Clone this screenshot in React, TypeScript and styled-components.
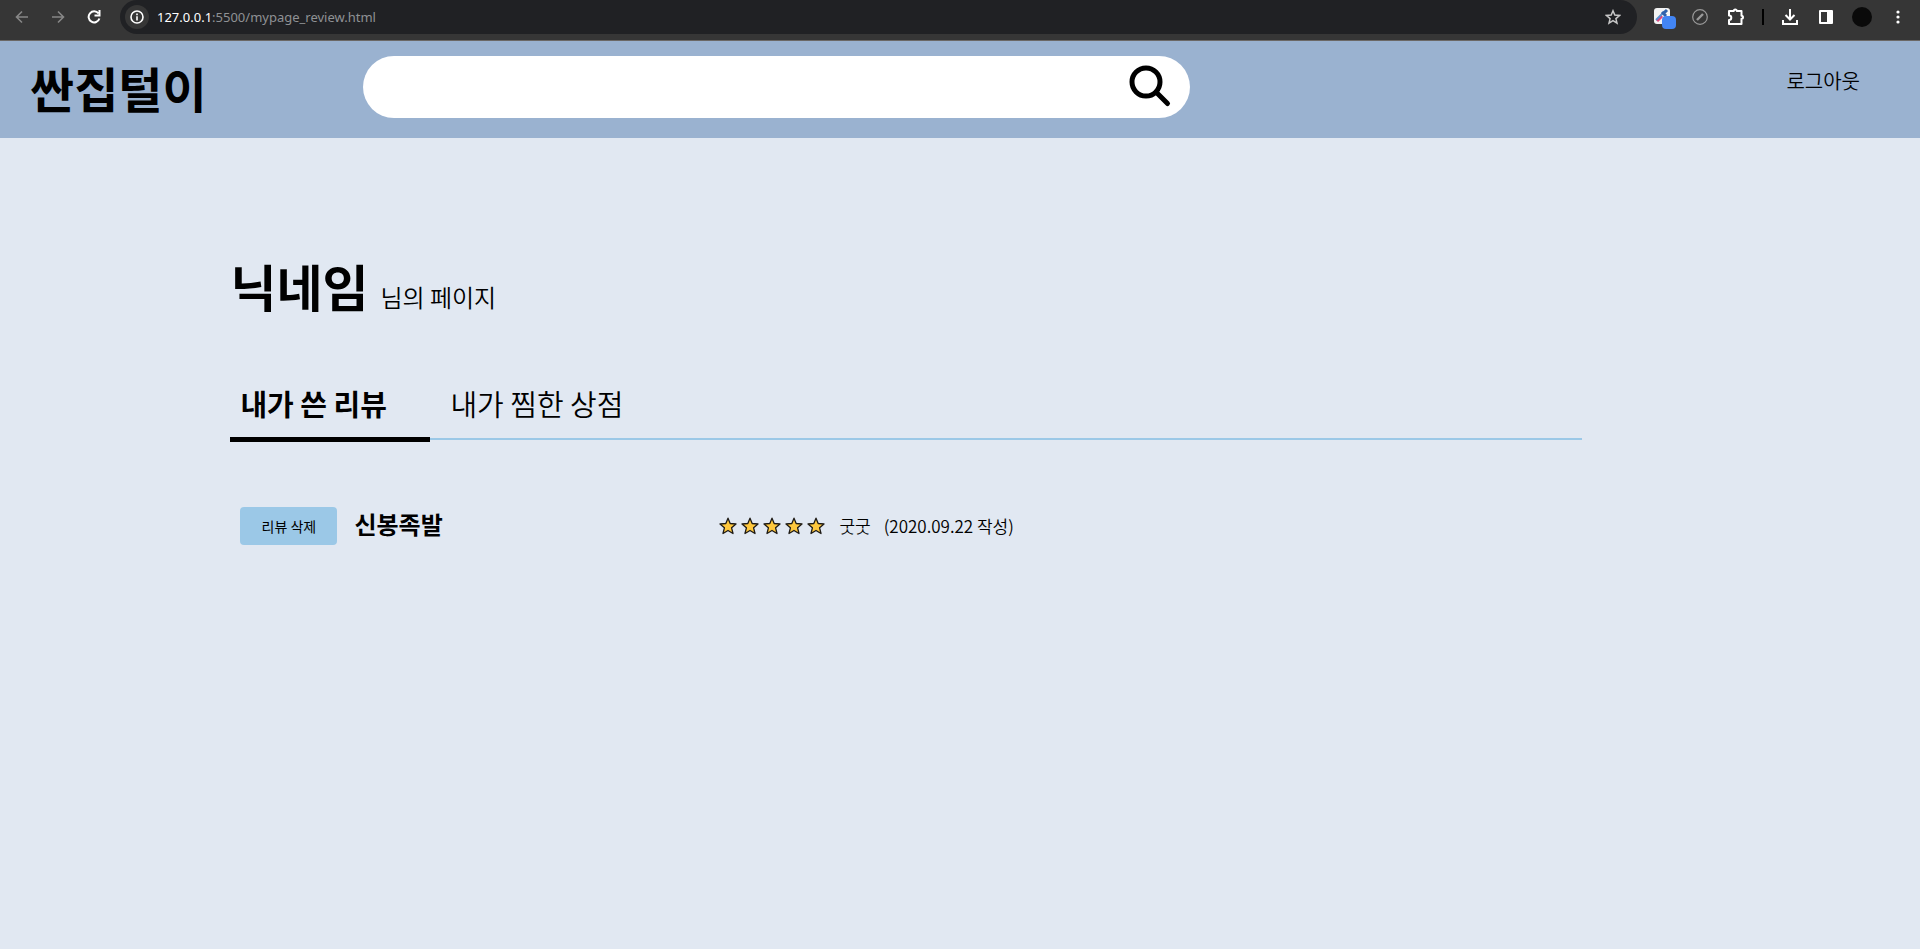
import React, { useState } from "react";
import styled, { createGlobalStyle } from "styled-components";

const GlobalStyle = createGlobalStyle`
  *, *::before, *::after { box-sizing: border-box; }
  body {
    margin: 0;
    background: #e1e8f2;
    color: #000;
    font-family: "Noto Sans CJK KR", "Noto Sans", sans-serif;
  }
`;

const BrowserBar = styled.div`
  display: flex;
  align-items: flex-start;
  height: 41px;
  padding: 0 10px;
  background: #363636;
  border-bottom: 1px solid #6b6866;
`;

const IconButton = styled.button<{ $color?: string }>`
  display: flex;
  align-items: center;
  justify-content: center;
  flex: none;
  width: 24px;
  height: 34px;
  padding: 0;
  border: 0;
  background: none;
  color: ${(p) => p.$color ?? "#fff"};
`;

const NavGroup = styled.div`
  display: flex;
  flex: none;
  gap: 12px;
  margin-right: 14px;
`;

const AddressBar = styled.div`
  display: flex;
  align-items: center;
  flex: 1;
  height: 34px;
  padding: 0 12px 0 5px;
  border-radius: 17px;
  background: #202124;
`;

const SiteInfo = styled(IconButton)`
  width: 24px;
  height: 24px;
  margin-right: 8px;
  border-radius: 50%;
  background: #363636;
`;

const Address = styled.div`
  flex: 1;
  color: #8f9194;
  font: 13px/18px "Noto Sans", "Open Sans", sans-serif;
`;

const Host = styled.span`
  color: #fff;
`;

const ToolGroup = styled.div`
  display: flex;
  flex: none;
  gap: 12px;
  margin-left: 15px;
`;

const Divider = styled.span`
  width: 2px;
  height: 16px;
  margin: 9px 2px 0;
  background: #000;
`;

const Avatar = styled.span`
  width: 20px;
  height: 20px;
  border-radius: 50%;
  background: #0a0a0a;
`;

const Header = styled.header`
  display: flex;
  align-items: flex-start;
  padding: 15px 60px 20px 30px;
  background: #9ab2d0;
`;

const Logo = styled.a`
  flex: none;
  width: 333px;
  color: #000;
  font-size: 48px;
  font-weight: 700;
  line-height: 62px;
  text-decoration: none;
`;

const SearchForm = styled.form`
  display: flex;
  align-items: center;
  min-width: 280px;
  flex: 0 1 827px;
  height: 62px;
  padding: 0 18px 0 30px;
  border-radius: 31px;
  background: #fff;
`;

const SearchInput = styled.input`
  flex: 1;
  min-width: 0;
  height: 40px;
  border: 0;
  outline: 0;
  background: none;
  font: 20px/30px "Noto Sans CJK KR", sans-serif;
`;

const SearchButton = styled.button`
  display: flex;
  padding: 0;
  border: 0;
  background: none;
`;

const Logout = styled.a`
  margin-left: auto;
  padding-top: 11px;
  color: #000;
  font-size: 20px;
  font-weight: 350;
  line-height: 28px;
  text-decoration: none;
`;

const Page = styled.main`
  width: 1352px;
  max-width: 76%;
  margin: 0 0 0 12%;
  padding-top: 109px;
`;

const PageTitle = styled.h1`
  display: flex;
  align-items: baseline;
  gap: 12px;
  margin: 0;
  font-size: 50px;
  line-height: 76px;
`;

const TitleNote = styled.span`
  font-size: 24px;
  font-weight: 350;
`;

const Tabs = styled.nav`
  display: flex;
  align-items: flex-start;
  gap: 10px;
  height: 66px;
  margin-top: 39px;
  border-bottom: 2px solid #9bc8e7;
`;

const Tab = styled.button<{ $active: boolean }>`
  flex: none;
  min-width: 200px;
  height: 68px;
  padding: 7px 10px 13px;
  border: 0;
  border-bottom: 5px solid ${(p) => (p.$active ? "#000" : "transparent")};
  background: none;
  color: #000;
  font: ${(p) => (p.$active ? 700 : 350)} 29px/40px "Noto Sans CJK KR", sans-serif;
  text-align: left;
`;

const ReviewList = styled.ul`
  margin: 0;
  padding: 67px 10px 0;
  list-style: none;
`;

const Review = styled.li`
  display: flex;
  align-items: center;
`;

const DeleteButton = styled.button`
  flex: none;
  width: 97px;
  height: 38px;
  margin-right: 17px;
  border: 0;
  border-radius: 4px;
  background: #9bc8e7;
  color: #000;
  font: 400 14px/20px "Noto Sans CJK KR", sans-serif;
`;

const Shop = styled.h2`
  flex: none;
  width: 365px;
  margin: 0;
  padding-bottom: 5px;
  font-size: 24px;
  line-height: 32px;
`;

const Stars = styled.span`
  display: flex;
  gap: 4px;
  margin-right: 14px;
`;

const Comment = styled.span`
  margin-right: 13px;
  font-size: 17px;
  font-weight: 350;
  line-height: 24px;
`;

const stroke = { fill: "none", stroke: "currentColor", strokeWidth: 2 };

const Star = () => (
  <svg width="18" height="18" viewBox="0 0 18 18">
    <path
      d="M9 1.2l2.200 5.300 5.800.5-4.400 3.800 1.400 5.700L9 13.500l-5 3 1.400-5.700L1 7l5.800-.5z"
      fill="#ffc83d"
      stroke="#1d1a16"
      strokeWidth="1.300"
      strokeLinejoin="round"
    />
  </svg>
);

const reviews = [{ shop: "신봉족발", stars: 5, text: "굿굿", date: "2020.09.22" }];
const tabs = ["내가 쓴 리뷰", "내가 찜한 상점"];

export default function App() {
  const [active, setActive] = useState(0);
  return (
    <>
      <GlobalStyle />
      <BrowserBar>
        <NavGroup>
          <IconButton aria-label="Back" $color="#878787">
            <svg width="14" height="14" viewBox="0 0 14 14" {...stroke} strokeWidth={1.6}>
              <path d="M13 7H2M7 1.500L1.500 7 7 12.500" />
            </svg>
          </IconButton>
          <IconButton aria-label="Forward" $color="#878787">
            <svg width="14" height="14" viewBox="0 0 14 14" {...stroke} strokeWidth={1.6}>
              <path d="M1 7h11M7 1.500L12.500 7 7 12.500" />
            </svg>
          </IconButton>
          <IconButton aria-label="Reload">
            <svg width="14" height="14" viewBox="0 0 14 14" {...stroke}>
              <path d="M11.500 3.500A5.500 5.500 0 1 0 12.400 8.500M12.500 0v5.500H7.500" />
            </svg>
          </IconButton>
        </NavGroup>
        <AddressBar>
          <SiteInfo aria-label="Site information">
            <svg width="14" height="14" viewBox="0 0 14 14" {...stroke} strokeWidth={1.6}>
              <circle cx="7" cy="7" r="6" />
              <path d="M7 6.200V10.500M7 3.500v1.700" />
            </svg>
          </SiteInfo>
          <Address>
            <Host>127.0.0.1</Host>:5500/mypage_review.html
          </Address>
          <IconButton aria-label="Bookmark" $color="#c7c7c7">
            <svg width="16" height="16" viewBox="0 0 16 16" {...stroke} strokeWidth={1.5}>
              <path d="M8 1.800l1.800 4.300 4.700.4-3.600 3.100 1.100 4.600L8 11.700l-4 2.500 1.100-4.600L1.500 6.500l4.700-.4z" />
            </svg>
          </IconButton>
        </AddressBar>
        <ToolGroup>
          <IconButton aria-label="Color picker">
            <svg width="24" height="24" viewBox="0 0 24 24">
              <rect x="2" y="3" width="16" height="16" rx="3" fill="#f3f3f3" />
              <path d="M5 16L10 11" stroke="#e0457b" strokeWidth="3" />
              <path d="M4 15L13 6" stroke="#5a8fd0" strokeWidth="2" />
              <path d="M10 7l4 4M12 8l3-3" stroke="#2f62ab" strokeWidth="3" />
              <rect x="10" y="11" width="14" height="13" rx="4" fill="#4285f4" />
            </svg>
          </IconButton>
          <IconButton aria-label="Blocked extension" $color="#9a9a9a">
            <svg width="16" height="16" viewBox="0 0 16 16" {...stroke}>
              <circle cx="8" cy="8" r="7.300" strokeWidth="1.200" />
              <path d="M5 11L11 5" strokeWidth="2.400" />
            </svg>
          </IconButton>
          <IconButton aria-label="Extensions">
            <svg width="18" height="18" viewBox="0 0 18 18" {...stroke}>
              <path
                d="M2 3h4.800a1.500 1.500 0 0 1 3 0H14.500v4.800a1.500 1.500 0 0 1 0 3V16H2v-4a2.300 2.300 0 0 0 0-4.600z"
                strokeLinejoin="round"
              />
            </svg>
          </IconButton>
          <Divider />
          <IconButton aria-label="Downloads">
            <svg width="16" height="16" viewBox="0 0 16 16" {...stroke}>
              <path d="M8 0v10M3.500 6L8 10.500 12.500 6M1 11v4h14v-4" />
            </svg>
          </IconButton>
          <IconButton aria-label="Side panel">
            <svg width="16" height="16" viewBox="0 0 16 16">
              <path
                fillRule="evenodd"
                d="M2 1h12a1 1 0 0 1 1 1v12a1 1 0 0 1-1 1H2a1 1 0 0 1-1-1V2a1 1 0 0 1 1-1zm1 2v10h6V3z"
                fill="currentColor"
              />
            </svg>
          </IconButton>
          <IconButton aria-label="Profile">
            <Avatar />
          </IconButton>
          <IconButton aria-label="Menu">
            <svg width="4" height="16" viewBox="0 0 4 16" fill="currentColor">
              <circle cx="2" cy="3" r="1.600" />
              <circle cx="2" cy="8" r="1.600" />
              <circle cx="2" cy="13" r="1.600" />
            </svg>
          </IconButton>
        </ToolGroup>
      </BrowserBar>
      <Header>
        <Logo href="#">싼집털이</Logo>
        <SearchForm role="search" onSubmit={(e) => e.preventDefault()}>
          <SearchInput type="search" aria-label="검색" />
          <SearchButton aria-label="검색">
            <svg width="44" height="44" viewBox="0 0 44 44" fill="none" stroke="#000">
              <circle cx="18" cy="17" r="14" strokeWidth="5" />
              <path d="M28 27L39.500 38.500" strokeWidth="5" strokeLinecap="round" />
            </svg>
          </SearchButton>
        </SearchForm>
        <Logout href="#">로그아웃</Logout>
      </Header>
      <Page>
        <PageTitle>
          닉네임 <TitleNote>님의 페이지</TitleNote>
        </PageTitle>
        <Tabs>
          {tabs.map((label, i) => (
            <Tab key={label} $active={i === active} onClick={() => setActive(i)}>
              {label}
            </Tab>
          ))}
        </Tabs>
        <ReviewList>
          {reviews.map((r) => (
            <Review key={r.shop}>
              <DeleteButton>리뷰 삭제</DeleteButton>
              <Shop>{r.shop}</Shop>
              <Stars role="img" aria-label={`별점 ${r.stars}점`}>
                {Array.from({ length: r.stars }, (_, i) => (
                  <Star key={i} />
                ))}
              </Stars>
              <Comment>{r.text}</Comment>
              <Comment>({r.date} 작성)</Comment>
            </Review>
          ))}
        </ReviewList>
      </Page>
    </>
  );
}
